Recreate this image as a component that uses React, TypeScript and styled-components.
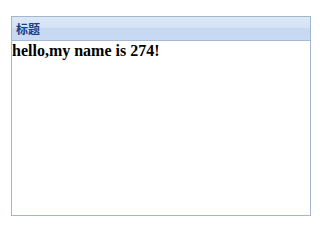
import styled, { createGlobalStyle } from "styled-components";

const Global = createGlobalStyle`
    html, body {
        margin: 0;
        padding: 0;
        background: #fff;
    }
`;

export default function App() {
    return (
        <>
            <Global />
            <Page>
                <Panel>
                    <Header>
                        <span>标题</span>
                    </Header>
                    <Body>hello,my name is 274!</Body>
                </Panel>
            </Page>
        </>
    );
}

const Page = styled.div`
    padding: 16px 0 0 11px;
`;

const Panel = styled.div`
    width: 300px;
    height: 200px;
    box-sizing: border-box;
    border: 1px solid #a3b6cd;
    display: flex;
    flex-direction: column;
`;

const Header = styled.div`
    height: 24px;
    box-sizing: border-box;
    border-bottom: 1px solid #a3b9d6;
    background: linear-gradient(to bottom, #dce7f6 0%, #d5e2f5 45%, #c6d8f2 50%, #c9daf3 100%);
    display: flex;
    align-items: center;
    padding-left: 4px;

    span {
        font-family: "Noto Sans CJK SC", sans-serif;
        font-size: 12px;
        font-weight: 700;
        color: #15428b;
    }
`;

const Body = styled.div`
    flex: 1;
    padding-top: 1px;
    font-family: "Liberation Serif", serif;
    font-size: 16px;
    font-weight: 700;
    color: #000;
`;
